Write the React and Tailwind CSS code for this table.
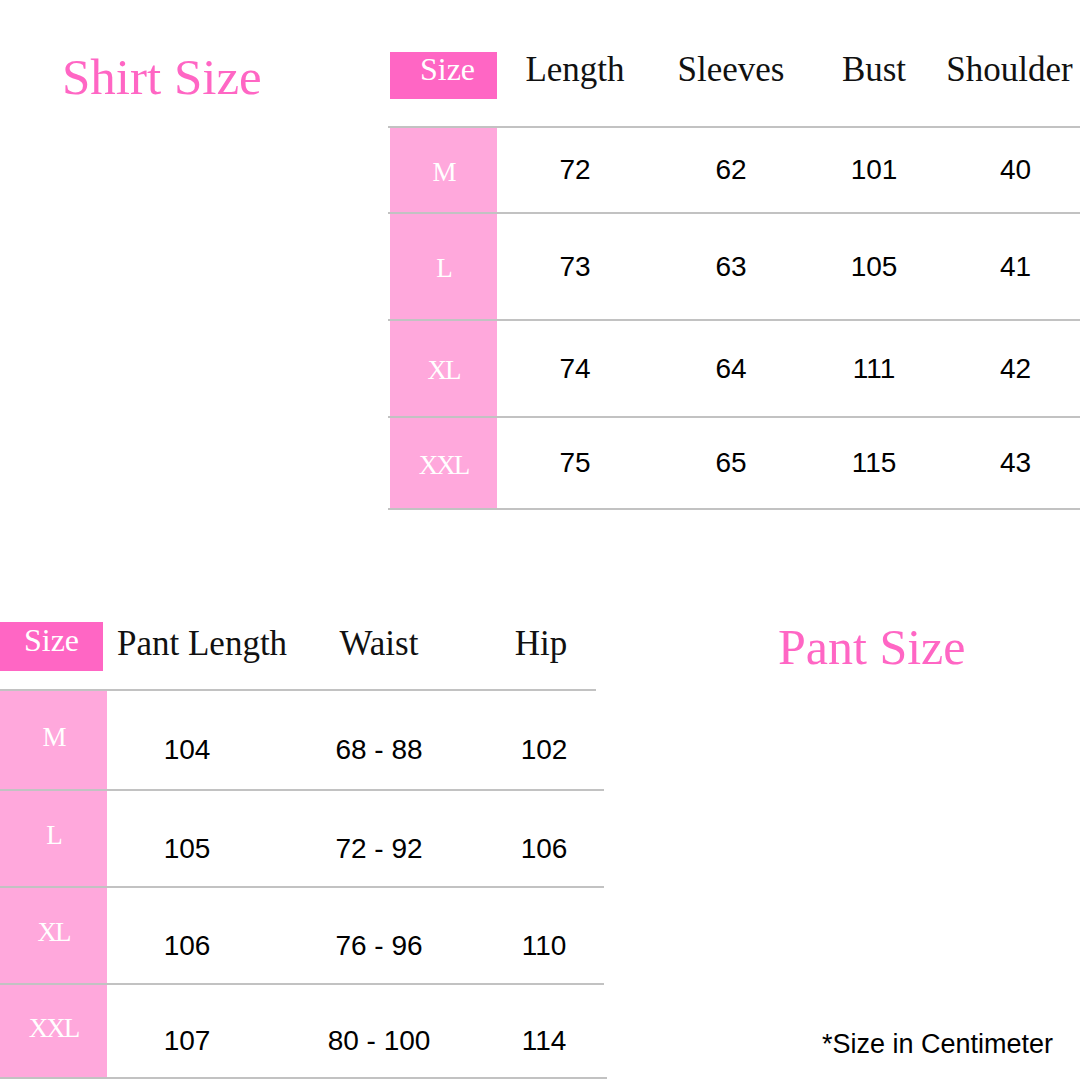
import React from 'react';

const serif = { fontFamily: '"Liberation Serif", "DejaVu Serif", serif' };
const sans = { fontFamily: '"Liberation Sans", Arial, sans-serif' };

// размеры рубашки
const shirtRows = [
  { size: 'M', h: 'h-[84px]', vals: ['72', '62', '101', '40'] },
  { size: 'L', h: 'h-[105px]', vals: ['73', '63', '105', '41'] },
  { size: 'XL', h: 'h-[95px]', vals: ['74', '64', '111', '42'] },
  { size: 'XXL', h: 'h-[90px]', vals: ['75', '65', '115', '43'] },
];

const pantRows = [
  { size: 'M', h: 'h-[98px]', vals: ['104', '68 - 88', '102'] },
  { size: 'L', h: 'h-[95px]', vals: ['105', '72 - 92', '106'] },
  { size: 'XL', h: 'h-[95px]', vals: ['106', '76 - 96', '110'] },
  { size: 'XXL', h: 'h-[92px]', vals: ['107', '80 - 100', '114'] },
];

const Line = ({ className = 'w-full' }) => <div className={`h-[2px] bg-[#c2c2c2] ${className}`} />;

const SizeLabel = ({ children }) => (
  <span className="text-[27px] leading-none text-white tracking-[-2px]" style={serif}>{children}</span>
);

const ShirtTable = () => (
  <div className="w-[692px]">
    <div className="grid grid-cols-[107px_156px_156px_130px_141px] h-[74px] items-start pl-[2px] text-[#111]" style={serif}>
      <div className="h-[47px] bg-[#ff66c4] flex justify-center pl-2 pt-px">
        <span className="text-[32px] leading-none text-white">Size</span>
      </div>
      {['Length', 'Sleeves', 'Bust', 'Shoulder'].map(h => (
        <div key={h} className="flex justify-center whitespace-nowrap">
          <span className="text-[35px] leading-none">{h}</span>
        </div>
      ))}
    </div>
    <Line />
    {shirtRows.map(r => (
      <React.Fragment key={r.size}>
        <div className={`grid grid-cols-[107px_156px_156px_130px_141px] pl-[2px] ${r.h}`}>
          <div className="bg-[#ffa8dc] flex items-center justify-center pt-1">
            <SizeLabel>{r.size}</SizeLabel>
          </div>
          {r.vals.map((v, i) => (
            <div key={i} className={`flex items-center justify-center ${i === 3 ? 'pl-[12px]' : ''}`}>
              <span className="text-[28px] leading-none text-black" style={sans}>{v}</span>
            </div>
          ))}
        </div>
        <Line />
      </React.Fragment>
    ))}
  </div>
);

const PantTable = () => (
  <div className="w-[608px]">
    <div className="grid grid-cols-[107px_160px_224px_100px] h-[67px] items-start text-[#111]" style={serif}>
      <div className="w-[103px] h-[49px] bg-[#ff66c4] flex justify-center pt-0.5">
        <span className="text-[32px] leading-none text-white">Size</span>
      </div>
      <div className="pl-[10px] pt-1 whitespace-nowrap">
        <span className="text-[35px] leading-none">Pant Length</span>
      </div>
      <div className="flex justify-center pt-1">
        <span className="text-[35px] leading-none">Waist</span>
      </div>
      <div className="flex justify-center pt-1">
        <span className="text-[35px] leading-none">Hip</span>
      </div>
    </div>
    <Line className="w-[596px]" />
    {pantRows.map((r, idx) => (
      <React.Fragment key={r.size}>
        <div className={`grid grid-cols-[107px_160px_224px_100px] ${r.h}`}>
          <div className="bg-[#ffa8dc] flex items-center justify-center pb-[6px]">
            <SizeLabel>{r.size}</SizeLabel>
          </div>
          {r.vals.map((v, i) => (
            <div key={i} className={`flex items-center justify-center pt-[20px] ${i === 2 ? 'pl-[6px]' : ''}`}>
              <span className="text-[28px] leading-none text-black whitespace-pre" style={sans}>{v}</span>
            </div>
          ))}
        </div>
        <Line className={idx === 3 ? 'w-[607px]' : 'w-[604px]'} />
      </React.Fragment>
    ))}
  </div>
);

export default function App() {
  return (
    <div className="w-[1080px] h-[1080px] bg-white overflow-hidden">
      <section className="flex pt-[52px]">
        <div className="w-[388px] pl-[62px]">
          <h1 className="text-[51px] leading-none text-[#ff66c4]" style={serif}>Shirt Size</h1>
        </div>
        <ShirtTable />
      </section>

      <section className="flex mt-[112px]">
        <PantTable />
        <div className="flex-1 flex flex-col justify-between">
          <h2 className="pl-[170px] text-[50px] leading-none text-[#ff66c4]" style={serif}>Pant Size</h2>
          <p className="pl-[214px] pb-[21px] text-[27px] leading-none text-black whitespace-nowrap" style={sans}>
            *Size in Centimeter
          </p>
        </div>
      </section>
    </div>
  );
}
